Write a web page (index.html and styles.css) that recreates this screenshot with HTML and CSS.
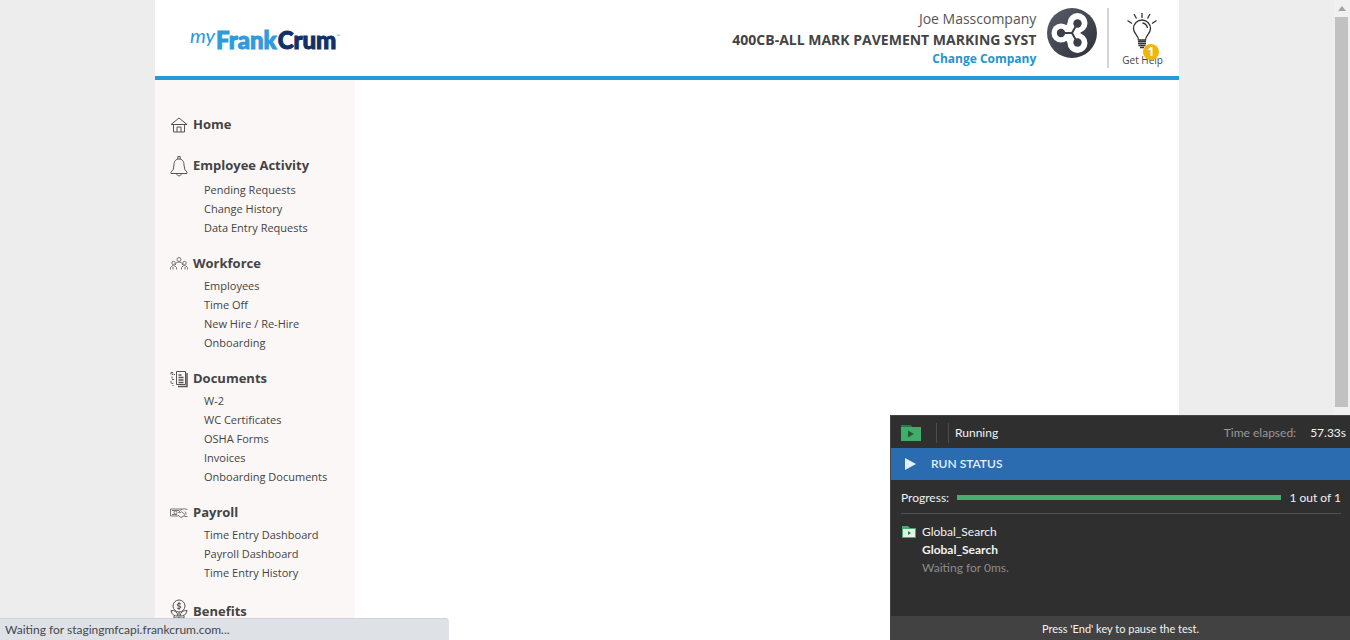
FILE: index.html
```html
<!DOCTYPE html>
<html lang="en">
<head>
<meta charset="utf-8">
<meta name="viewport" content="width=device-width, initial-scale=1">
<title>myFrankCrum</title>
<link rel="stylesheet" href="styles.css">
</head>
<body>
<div class="viewport">
  <div class="page">
    <header class="header">
      <a class="logo" href="#"><span class="logo-my">my</span><span class="logo-frank">Frank</span><span class="logo-crum">Crum</span><span class="logo-tm">™</span></a>
      <div class="account">
        <span class="user">Joe Masscompany</span>
        <span class="company">400CB-ALL MARK PAVEMENT MARKING SYST</span>
        <a class="change" href="#">Change Company</a>
      </div>
      <svg class="avatar" viewBox="0 0 50 50" aria-hidden="true">
        <defs><linearGradient id="disc" x1="0" y1="0" x2="1" y2="1"><stop offset="0" stop-color="#5a5e68"/><stop offset="1" stop-color="#2c303a"/></linearGradient></defs>
        <circle cx="25" cy="25" r="25" fill="url(#disc)"/>
        <g fill="#fff"><circle cx="30.500" cy="15" r="10"/><circle cx="30.500" cy="35" r="10"/><circle cx="14" cy="25" r="9.500"/></g>
        <path d="M14 25H24L30 15M24 25L30 35" fill="none" stroke="#fff" stroke-width="16" stroke-linejoin="round"/>
        <path d="M14 25H25L30 16M25 25L30 34" fill="none" stroke="#3b3f49" stroke-width="2"/>
        <g fill="#3b3f49"><circle cx="30.500" cy="15.500" r="4.200"/><circle cx="30.500" cy="34.500" r="4.200"/><circle cx="14" cy="25" r="4.200"/></g>
      </svg>
      <a class="help" href="#">
        <svg class="bulb" viewBox="0 0 32 38" fill="none" stroke="#333" stroke-width="1.300" aria-hidden="true">
          <path d="M15 1v5M7 2l2.500 4.500M23 2l-2.500 4.500M.5 8.500l4.500 3M29.500 8.500l-4.500 3"/>
          <path d="M11.500 28C11.500 23 6.500 22 6.500 16.500a8.500 8.500 0 0 1 17 0C23.500 22 18.500 23 18.500 28Z"/>
          <path d="M15.500 11q4 .5 5 5"/>
          <path d="M11 29.500h8M11 31.500h8M11.500 33.500h7M13 35.500h4" stroke-width="1.500"/>
        </svg>
        <span class="help-label">Get Help</span>
        <span class="badge">1</span>
      </a>
    </header>
    <div class="body">
      <nav class="sidebar">
        <section class="group">
          <h2 class="heading"><svg class="icon" viewBox="0 0 18 18"><path d="M1 8.500L9 2l8 6.500H1M3.500 8.500V16h11V8.500M7 16v-5h4v5"/></svg><a href="#">Home</a></h2>
        </section>
        <section class="group">
          <h2 class="heading heading-bell"><svg class="icon icon-tall" viewBox="0 0 18 22"><path d="M7.800 4V1.500h2.400V4M1 18.500h16v-1.200Q14 15 14 10C14 6 12 4 9 4S4 6 4 10Q4 15 1 17.300ZM6.500 19q2.500 4 5 0"/></svg><a href="#">Employee Activity</a></h2>
          <ul class="list"><li><a href="#">Pending Requests</a></li><li><a href="#">Change History</a></li><li><a href="#">Data Entry Requests</a></li></ul>
        </section>
        <section class="group">
          <h2 class="heading"><svg class="icon icon-fine" viewBox="0 0 18 18"><circle cx="9" cy="4.500" r="2"/><circle cx="3.500" cy="8" r="1.700"/><circle cx="14.500" cy="8" r="1.700"/><path d="M5.500 10V8.500Q7 7 9 7t3.500 1.500V10M.5 14.500v-2Q2 10.500 3.500 10.500T6.500 12.500v2M11.500 14.500v-2Q13 10.500 14.500 10.500T17.500 12.500v2M3 12v2.500M15 12v2.500"/></svg><a href="#">Workforce</a></h2>
          <ul class="list"><li><a href="#">Employees</a></li><li><a href="#">Time Off</a></li><li><a href="#">New Hire / Re-Hire</a></li><li><a href="#">Onboarding</a></li></ul>
        </section>
        <section class="group">
          <h2 class="heading"><svg class="icon" viewBox="0 0 18 18"><path d="M6.500 1.500h9v13h-9Z"/><path d="M17 3v13.500H8" stroke-width="1.500"/><path d="M8.500 5h3M8.500 7.500h5M8.500 10h5M8.500 12.500h5" stroke-width="1.400"/><path d="M1 2.500h2v2H1ZM4 4.500h1M2 6.500v3h2M1 11v2.500h2v2.500" stroke-dasharray="2 1"/></svg><a href="#">Documents</a></h2>
          <ul class="list"><li><a href="#">W-2</a></li><li><a href="#">WC Certificates</a></li><li><a href="#">OSHA Forms</a></li><li><a href="#">Invoices</a></li><li><a href="#">Onboarding Documents</a></li></ul>
        </section>
        <section class="group">
          <h2 class="heading"><svg class="icon icon-fine" viewBox="0 0 18 18"><path d="M8 12H.5V5H12M2 6.500h7M2 10.500h5"/><circle cx="5.500" cy="8.500" r="1.500"/><path d="M17.500 5.500Q14 4 11 5.500L8.500 8.500q1.500 1 3-.8L15 10.500q0 2-2 1.500l-1 1.500-2-.5-2-2M14.500 12.500H17.500M15 7.500q1.500 1.500 1 3"/></svg><a href="#">Payroll</a></h2>
          <ul class="list"><li><a href="#">Time Entry Dashboard</a></li><li><a href="#">Payroll Dashboard</a></li><li><a href="#">Time Entry History</a></li></ul>
        </section>
        <section class="group">
          <h2 class="heading heading-benefits"><svg class="icon icon-benefits" viewBox="0 0 18 25"><circle cx="9" cy="7" r="6"/><path d="M11 5Q9 3.500 7.500 5T9 7t1.500 2T7 9M9 3v8M9 13v8M1 11.500q6-.5 7 5.500Q2 17.500 1 11.500ZM17 11.500q-6-.5-7 5.500 6 .5 7-5.500ZM4 17v7M14 17v7M4 19h10"/></svg><a href="#">Benefits</a></h2>
        </section>
      </nav>
      <main class="content"></main>
    </div>
  </div>
</div>
<div class="scrollbar"><span class="arrow"></span><span class="thumb"></span></div>
<div class="browser-status">Waiting for stagingmfcapi.frankcrum.com...</div>
<aside class="runner">
  <div class="runner-top">
    <svg class="folder" viewBox="0 0 20 18" aria-hidden="true"><path d="M0 1h9l2 2h9v14H0Z" fill="#3fae6a"/><path d="M0 1h9l2 2H0Z" fill="#267d48"/><path d="M7 6.500v7l6-3.500Z" fill="#27553a"/></svg>
    <span class="separators"></span>
    <span class="state">Running</span>
    <span class="elapsed">Time elapsed:</span>
    <span class="time">57.33s</span>
  </div>
  <div class="runner-tab"><svg class="play" viewBox="0 0 11 12" aria-hidden="true"><path d="M0 0v12l11-6Z" fill="#e4f1fb"/></svg>RUN STATUS</div>
  <div class="runner-main">
    <div class="progress"><span>Progress:</span><span class="bar"></span><span>1 out of 1</span></div>
    <div class="test">
      <svg class="small-folder" viewBox="0 0 14 12" aria-hidden="true"><path d="M0 0h6l2 2h6v10H0Z" fill="#3fae6a"/><path d="M1 3h12v8H1Z" fill="#dff5e6"/><path d="M6 5v4l3-2Z" fill="#2c7a4a"/></svg>
      <div class="test-text"><span>Global_Search</span><strong>Global_Search</strong><span class="muted">Waiting for 0ms.</span></div>
    </div>
  </div>
  <div class="runner-foot">Press 'End' key to pause the test.</div>
</aside>
</body>
</html>
```

FILE: styles.css
```css
* { box-sizing: border-box; }
body {
  margin: 0;
  height: 100vh;
  display: flex;
  overflow: hidden;
  background: #ededed;
  color: #444;
  font-family: "Open Sans", "Noto Sans", sans-serif;
}
a { color: inherit; text-decoration: none; }
.viewport { flex: 1; height: 100%; overflow: hidden; }
.page {
  max-width: 1024px;
  min-height: 100%;
  margin: 0 auto;
  display: flex;
  flex-direction: column;
  background: #fff;
}
.header {
  display: flex;
  align-items: flex-start;
  height: 80px;
  padding: 8px 16px 0 35px;
  border-bottom: 4px solid #259bd8;
}
.logo {
  display: flex;
  align-items: flex-start;
  margin: 18px auto 0 0;
  font: 900 24px/28px Lato, sans-serif;
}
.logo-my { margin-right: 1px; font-size: 20px; line-height: 18px; font-weight: 400; font-style: italic; color: #259bd8; -webkit-text-stroke: 0; }
.logo-frank { margin-right: 1px; color: #2d9bdc; -webkit-text-stroke: 1px #2d9bdc; }
.logo-crum { color: #11306b; -webkit-text-stroke: 1px #11306b; }
.logo-tm { font-size: 5px; line-height: 20px; font-weight: 400; color: #888; }
.account { display: flex; flex-direction: column; align-items: flex-end; }
.user { font-size: 14px; line-height: 22px; color: #555; }
.company { font-size: 14px; line-height: 20px; font-weight: 700; }
.change { font-size: 12px; line-height: 18px; font-weight: 700; color: #2594cd; }
.avatar { width: 50px; height: 50px; margin: 0 10px 0 11px; }
.help {
  position: relative;
  display: flex;
  flex-direction: column;
  align-items: center;
  height: 60px;
  padding: 4px 0 0 13px;
  border-left: 2px solid #d5d5d5;
}
.bulb { flex: none; width: 32px; height: 38px; }
.help-label { font-size: 10px; line-height: 20px; }
.badge {
  position: absolute;
  right: 4px;
  top: 36px;
  width: 16px;
  height: 16px;
  border-radius: 50%;
  background: #efb70d;
  color: #fff;
  font-size: 12px;
  line-height: 15px;
  font-weight: 700;
  text-align: center;
}
.body { flex: 1; display: flex; }
.sidebar { width: 200px; padding: 34px 15px 0; background: #fbf7f6; }
.group { display: flow-root; margin-bottom: 16px; }
.heading {
  display: flex;
  align-items: center;
  gap: 5px;
  height: 21px;
  margin: 0 0 2px;
  font-size: 13px;
  line-height: 21px;
  font-weight: 700;
}
.heading-bell { height: 25px; }
.heading-benefits { height: 27px; }
.icon { width: 18px; height: 18px; fill: none; stroke: #555; stroke-width: 1; }
.icon-fine { stroke: #777; }
.icon-tall { height: 22px; }
.icon-benefits { height: 25px; }
.list { margin: 0; padding: 0 0 0 34px; list-style: none; font-size: 11px; line-height: 19px; white-space: nowrap; }
.content { flex: 1; }
.scrollbar {
  display: flex;
  flex-direction: column;
  align-items: center;
  width: 16px;
  padding-right: 1px;
  background: #f0f0f0;
}
.arrow { margin: 6px 0; border: 4px solid transparent; border-top: 0; border-bottom: 5px solid #a3a3a3; }
.thumb { width: 13px; height: 61%; background: #c1c1c1; }
.browser-status {
  position: fixed;
  left: 0;
  bottom: 0;
  width: 449px;
  height: 22px;
  padding-left: 5px;
  border-top: 1px solid #cfd2d6;
  border-top-right-radius: 4px;
  background: #dee1e6;
  color: #45484c;
  font-family: Lato, sans-serif;
  font-size: 12px;
  line-height: 22px;
}
.runner {
  position: fixed;
  right: 0;
  bottom: 0;
  width: 460px;
  display: flex;
  flex-direction: column;
  border: solid #454545;
  border-width: 1px 0 0 1px;
  background: #2f2f2f;
  color: #f2f2f2;
  font-family: Lato, sans-serif;
  font-size: 12px;
  line-height: 18px;
}
.runner-top { display: flex; align-items: center; height: 32px; padding: 1px 4px 0 10px; }
.folder { width: 20px; height: 18px; }
.separators { width: 13px; height: 20px; margin: 0 6px 0 15px; border: solid #4c4c4c; border-width: 0 1px; }
.elapsed { margin: 0 14px 0 auto; color: #999; }
.runner-tab {
  display: flex;
  align-items: center;
  gap: 15px;
  height: 32px;
  padding-left: 14px;
  background: #2b6cb0;
  color: #e4f1fb;
  font-weight: 600;
}
.play { width: 11px; height: 12px; }
.runner-main { height: 136px; padding: 0 9px 0 10px; }
.progress { display: flex; align-items: center; gap: 8px; height: 34px; padding-top: 2px; border-bottom: 1px solid #505050; }
.bar { flex: 1; height: 5px; background: #48ad70; }
.test { display: flex; gap: 6px; padding: 9px 0 0 1px; }
.small-folder { width: 14px; height: 12px; margin-top: 3px; }
.test-text { display: flex; flex-direction: column; }
.test-text strong { font-weight: 700; }
.muted { color: #8c8c8c; }
.runner-foot { height: 24px; background: #424242; font-size: 11px; line-height: 26px; text-align: center; }
```
